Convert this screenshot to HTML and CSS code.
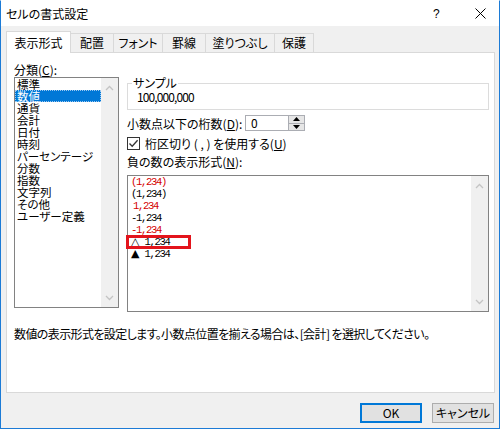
FILE: index.html
```html
<!DOCTYPE html>
<html lang="ja">
<head>
<meta charset="utf-8">
<title>セルの書式設定</title>
<link rel="stylesheet" href="styles.css">
</head>
<body>
<div class="window">
  <div class="titlebar">
    <span class="title">セルの書式設定</span>
    <span class="help">?</span>
    <svg class="close" width="11" height="11" viewBox="0 0 11 11"><path d="M0.5 0.5 L10.5 10.5 M10.5 0.5 L0.5 10.5" stroke="#000" stroke-width="1" fill="none"/></svg>
  </div>
  <div class="body">
    <div class="tabs">
      <div class="tab active">表示形式</div>
      <div class="tab t2">配置</div>
      <div class="tab t3">フォント</div>
      <div class="tab t4">罫線</div>
      <div class="tab t5">塗りつぶし</div>
      <div class="tab t6">保護</div>
    </div>
    <div class="panel">
      <div class="cols">
        <div class="left">
          <div class="label">分類(<u>C</u>):</div>
          <div class="listbox cat">
            <div class="items">
              <div class="item">標準</div>
              <div class="item selected">数値</div>
              <div class="item">通貨</div>
              <div class="item">会計</div>
              <div class="item">日付</div>
              <div class="item">時刻</div>
              <div class="item">パーセンテージ</div>
              <div class="item">分数</div>
              <div class="item">指数</div>
              <div class="item">文字列</div>
              <div class="item">その他</div>
              <div class="item">ユーザー定義</div>
            </div>
            <div class="vscroll">
              <svg width="9" height="6" viewBox="0 0 9 6"><path d="M1 5 L4.5 1.5 L8 5" stroke="#c4c4c4" stroke-width="1.3" fill="none"/></svg>
              <svg width="9" height="6" viewBox="0 0 9 6"><path d="M1 1 L4.5 4.5 L8 1" stroke="#c4c4c4" stroke-width="1.3" fill="none"/></svg>
            </div>
          </div>
        </div>
        <div class="right">
          <fieldset class="sample">
            <legend>サンプル</legend>
            <div class="sample-value">100,000,000</div>
          </fieldset>
          <div class="row spin-row">
            <span class="row-label">小数点以下の桁数(<u>D</u>):</span>
            <span class="spin-input">0</span>
            <span class="spinner">
              <span class="spin-btn"><svg width="7" height="4" viewBox="0 0 7 4"><path d="M0 4 L3.5 0 L7 4 Z" fill="#000"/></svg></span>
              <span class="spin-btn"><svg width="7" height="4" viewBox="0 0 7 4"><path d="M0 0 L3.5 4 L7 0 Z" fill="#000"/></svg></span>
            </span>
          </div>
          <div class="row check-row">
            <span class="checkbox"><svg width="11" height="11" viewBox="0 0 11 11"><path d="M1.5 5.5 L4.2 8.3 L9.6 2.2" stroke="#333" stroke-width="1.3" fill="none"/></svg></span>
            <span>桁区切り ( , ) を使用する(<u>U</u>)</span>
          </div>
          <div class="label neg-label">負の数の表示形式(<u>N</u>):</div>
          <div class="listbox fmt">
            <div class="items">
              <div class="fitem red">(1,234)</div>
              <div class="fitem">(1,234)</div>
              <div class="fitem red indent">1,234</div>
              <div class="fitem">-1,234</div>
              <div class="fitem red">-1,234</div>
              <div class="fitem marked"><span class="tri">△</span> 1,234<span class="mark"></span></div>
              <div class="fitem"><span class="tri">▲</span> 1,234</div>
            </div>
            <div class="vscroll">
              <svg width="9" height="6" viewBox="0 0 9 6"><path d="M1 5 L4.5 1.5 L8 5" stroke="#c4c4c4" stroke-width="1.3" fill="none"/></svg>
              <svg width="9" height="6" viewBox="0 0 9 6"><path d="M1 1 L4.5 4.5 L8 1" stroke="#c4c4c4" stroke-width="1.3" fill="none"/></svg>
            </div>
          </div>
        </div>
      </div>
      <p class="desc">数値の表示形式を設定します。小数点位置を揃える場合は、[会計] を選択してください。</p>
    </div>
    <div class="buttons">
      <button class="btn default">OK</button>
      <button class="btn">キャンセル</button>
    </div>
  </div>
</div>
</body>
</html>
```

FILE: styles.css
```css
html, body {
  margin: 0;
  background: #ffffff;
}
body {
  font-family: "Noto Sans CJK JP", "Noto Sans", sans-serif;
  font-size: 12px;
  font-feature-settings: "palt";
  color: #000;
}
u { text-decoration: underline; text-underline-offset: 1px; }

.window {
  width: 500px;
  height: 429px;
  box-sizing: border-box;
  border: 1px solid #1c7bd6;
  border-top-color: #ffffff;
  background: #f0f0f0;
  display: flex;
  flex-direction: column;
}
.titlebar {
  height: 25px;
  flex: none;
  background: #fff;
  display: flex;
  align-items: center;
  padding-left: 5px;
  line-height: 14px;
}
.title { font-size: 12px; }
.help {
  margin-left: auto;
  width: 6px;
  font-family: "Liberation Sans", sans-serif;
  font-size: 12px;
}
.close {
  margin-left: 36px;
  margin-right: 13px;
}

.body {
  flex: 1;
  padding: 5px 4px 0 5px;
  display: flex;
  flex-direction: column;
}
.tabs {
  display: flex;
  align-items: flex-end;
  height: 21px;
  position: relative;
  z-index: 1;
}
.tab {
  box-sizing: border-box;
  height: 19px;
  border: 1px solid #d9d9d9;
  border-bottom: none;
  margin-left: -1px;
  background: #f0f0f0;
  display: flex;
  align-items: center;
  justify-content: center;
  line-height: 14px;
}
.tab.active {
  height: 22px;
  width: 65px;
  margin-left: 0;
  margin-bottom: -1px;
  background: #fff;
}
.t2 { width: 44px; }
.t3 { width: 50px; }
.t4 { width: 44px; }
.t5 { width: 70px; }
.t6 { width: 40px; }

.panel {
  box-sizing: border-box;
  height: 341px;
  background: #fff;
  border: 1px solid #d9d9d9;
  padding: 10px 0 0 7px;
}
.cols {
  display: grid;
  grid-template-columns: 105px 362px;
  column-gap: 8px;
  align-items: start;
}
.label {
  line-height: 14px;
  height: 14px;
  white-space: nowrap;
}
.listbox {
  box-sizing: border-box;
  border: 1px solid #828282;
  background: #fff;
  display: flex;
}
.listbox .items {
  flex: 1;
  min-width: 0;
}
.vscroll {
  width: 17px;
  flex: none;
  background: #f0f0f0;
  display: flex;
  flex-direction: column;
  justify-content: space-between;
  align-items: center;
  padding: 7px 0 6px;
  box-sizing: border-box;
}
.cat { height: 231px; }
.cat .item {
  height: 12px;
  line-height: 12px;
  font-size: 11.5px;
  padding-left: 2px;
  white-space: nowrap;
  box-sizing: border-box;
}
.cat .item.selected {
  background: #0078d7;
  color: #fff;
  outline: 1px dotted #9cc8f0;
  outline-offset: -1px;
}

.right { padding-top: 13px; }
.sample {
  margin: 0;
  border: 1px solid #dcdcdc;
  padding: 0 6px 5px 6px;
  width: 362px;
  box-sizing: border-box;
  min-width: 0;
}
.sample legend {
  padding: 0 1px;
  margin-left: -2px;
  line-height: 14px;
}
.sample-value {
  line-height: 14px;
  padding-left: 3px;
  letter-spacing: -0.9px;
}
.row {
  display: flex;
  align-items: center;
  height: 16px;
}
.spin-row { margin-top: 5px; }
.row-label { width: 118px; white-space: nowrap; }
.spin-input {
  box-sizing: border-box;
  width: 43px;
  height: 16px;
  border: 1px solid #abadb3;
  border-right: none;
  padding-left: 5px;
  line-height: 14px;
}
.spinner {
  box-sizing: border-box;
  width: 17px;
  height: 16px;
  border: 1px solid #abadb3;
  display: flex;
  flex-direction: column;
}
.spin-btn {
  flex: 1;
  background: #e6e6e6;
  display: flex;
  align-items: center;
  justify-content: center;
}
.spin-btn + .spin-btn { border-top: 1px solid #abadb3; }
.check-row { margin-top: 4px; gap: 5px; }
.checkbox {
  box-sizing: border-box;
  width: 13px;
  height: 13px;
  border: 1px solid #333;
  display: flex;
  align-items: center;
  justify-content: center;
  background: #fff;
}
.neg-label { margin-top: 4px; }
.fmt {
  margin-top: 6px;
  height: 137px;
  width: 362px;
}
.fitem {
  position: relative;
  height: 12px;
  line-height: 12px;
  padding-left: 3px;
  font-family: "Liberation Mono", monospace;
  font-size: 10.5px;
  letter-spacing: -1.3px;
  white-space: pre;
}
.fitem.red { color: #d40000; }
.fitem.indent { padding-left: 5px; }
.tri {
  font-family: "DejaVu Sans", sans-serif;
  font-size: 11px;
  letter-spacing: 0;
}
.mark {
  position: absolute;
  left: -2px;
  top: -1px;
  width: 65px;
  height: 14px;
  border: 3px solid #e3141c;
  box-sizing: border-box;
}

.desc {
  margin: 15px 0 0 0;
  line-height: 14px;
  white-space: nowrap;
  letter-spacing: -0.6px;
}

.buttons {
  display: flex;
  justify-content: flex-end;
  gap: 10px;
  margin-top: 10px;
  padding-right: 1px;
}
.btn {
  box-sizing: border-box;
  width: 62px;
  height: 20px;
  background: #e1e1e1;
  border: 1px solid #adadad;
  font-family: "Noto Sans CJK JP", sans-serif;
  font-feature-settings: "palt";
  font-size: 12px;
  line-height: 14px;
  padding: 0;
  color: #000;
}
.btn.default { border: 2px solid #0078d7; }
```
